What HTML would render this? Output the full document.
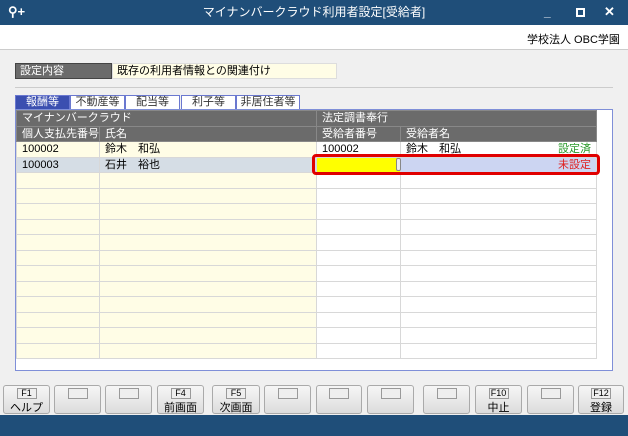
<!DOCTYPE html><html><head><meta charset="utf-8"><style>
*{box-sizing:border-box;margin:0;padding:0}
body{width:628px;height:436px;overflow:hidden;background:#f0f0f0;font-family:"Liberation Sans","Noto Sans CJK JP",sans-serif;font-size:11px;color:#000;position:relative}
.a{position:absolute}
.title{left:0;top:0;width:628px;height:25px;background:#1f4e79;color:#fff;font-size:12px;text-align:center;line-height:25px}
.white{left:0;top:25px;width:628px;height:25px;background:#fff;border-bottom:1px solid #ccc}
table{border-collapse:collapse;table-layout:fixed}
td{height:15.5px;padding:0 5px;white-space:nowrap;overflow:hidden;border:1px solid #d8d8d8;font-size:11px;line-height:14px}
.h td{background:#6b6b6b;color:#fff;border:1px solid #888}
.y{background:#fffde6}
.btn{top:385px;height:29px;border:1px solid #aaa;border-radius:3px;background:linear-gradient(#f6f6f6,#dcdcdc);text-align:center;font-size:11px}
.btn i{display:block;margin:2px auto 0;width:20px;height:11px;border:1px solid #999;background:#eee;font-style:normal;font-size:9px;line-height:9px}
.tab{top:95px;height:14px;border:1px solid #6a78d0;border-bottom:none;background:#fff;text-align:center;font-size:11px;line-height:13px;color:#333}
</style></head><body>
<div class="a title">マイナンバークラウド利用者設定[受給者]</div>
<div class="a" style="left:8px;top:4px;color:#fff;font-size:13px;font-weight:bold">⚲+</div>
<div class="a" style="left:544px;top:5px;color:#fff;font-size:12px;font-weight:bold">_</div>
<div class="a" style="left:576px;top:8px;width:9px;height:9px;border:2px solid #fff"></div>
<div class="a" style="left:604px;top:4px;color:#fff;font-size:13px;font-weight:bold">✕</div>
<div class="a white"></div>
<div class="a" style="left:527px;top:31px;font-size:11px">学校法人 OBC学園</div>
<div class="a" style="left:15px;top:63px;width:97px;height:16px;background:#6b6b6b;color:#fff;border:1px solid #444;padding-left:4px;line-height:14px">設定内容</div>
<div class="a" style="left:112px;top:63px;width:225px;height:16px;background:#fffde6;border:1px solid #ddd;padding-left:4px;line-height:14px">既存の利用者情報との関連付け</div>
<div class="a" style="left:15px;top:87px;width:598px;height:1px;background:#ccc"></div>
<div class="a tab" style="left:15px;width:55px;background:#3b4fb0;color:#fff">報酬等</div>
<div class="a tab" style="left:70px;width:55px">不動産等</div>
<div class="a tab" style="left:125px;width:55px">配当等</div>
<div class="a tab" style="left:181px;width:55px">利子等</div>
<div class="a tab" style="left:236px;width:64px">非居住者等</div>
<div class="a" style="left:15px;top:109px;width:598px;height:262px;background:#fff;border:1px solid #7f8fd8"></div>
<table class="a" style="left:16px;top:110px;width:580px">
<colgroup><col style="width:83px"><col style="width:217px"><col style="width:84px"><col style="width:196px"></colgroup>
<tr class="h"><td colspan="2">マイナンバークラウド</td><td colspan="2">法定調書奉行</td></tr>
<tr class="h"><td>個人支払先番号</td><td>氏名</td><td>受給者番号</td><td>受給者名</td></tr>
<tr><td class="y">100002</td><td class="y">鈴木　和弘</td><td>100002</td><td>鈴木　和弘<span style="float:right;color:#2a9a2a">設定済</span></td></tr>
<tr><td style="background:#d5dde5">100003</td><td style="background:#d5dde5">石井　裕也</td><td style="background:#ffff00"></td><td style="background:#ccd5f2;color:#e02020;text-align:right">未設定</td></tr>
<tr><td class="y"></td><td class="y"></td><td></td><td></td></tr>
<tr><td class="y"></td><td class="y"></td><td></td><td></td></tr>
<tr><td class="y"></td><td class="y"></td><td></td><td></td></tr>
<tr><td class="y"></td><td class="y"></td><td></td><td></td></tr>
<tr><td class="y"></td><td class="y"></td><td></td><td></td></tr>
<tr><td class="y"></td><td class="y"></td><td></td><td></td></tr>
<tr><td class="y"></td><td class="y"></td><td></td><td></td></tr>
<tr><td class="y"></td><td class="y"></td><td></td><td></td></tr>
<tr><td class="y"></td><td class="y"></td><td></td><td></td></tr>
<tr><td class="y"></td><td class="y"></td><td></td><td></td></tr>
<tr><td class="y"></td><td class="y"></td><td></td><td></td></tr>
<tr><td class="y"></td><td class="y"></td><td></td><td></td></tr>
</table>
<div class="a" style="left:396px;top:158px;width:5px;height:13px;border:1px solid #888;border-radius:2px;background:#eee"></div>
<div class="a" style="left:312px;top:154px;width:288px;height:21px;border:3px solid #e00000;border-radius:4px"></div>
<div class="a btn" style="left:3px;width:47px"><i>F1</i>ヘルプ</div>
<div class="a btn" style="left:54px;width:47px"><i></i></div>
<div class="a btn" style="left:105px;width:47px"><i></i></div>
<div class="a btn" style="left:157px;width:47px"><i>F4</i>前画面</div>
<div class="a btn" style="left:212px;width:48px"><i>F5</i>次画面</div>
<div class="a btn" style="left:264px;width:47px"><i></i></div>
<div class="a btn" style="left:316px;width:46px"><i></i></div>
<div class="a btn" style="left:367px;width:47px"><i></i></div>
<div class="a btn" style="left:423px;width:47px"><i></i></div>
<div class="a btn" style="left:475px;width:47px"><i>F10</i>中止</div>
<div class="a btn" style="left:527px;width:47px"><i></i></div>
<div class="a btn" style="left:578px;width:46px"><i>F12</i>登録</div>
<div class="a" style="left:0;top:415px;width:628px;height:21px;background:#1f4e79"></div>
</body></html>
